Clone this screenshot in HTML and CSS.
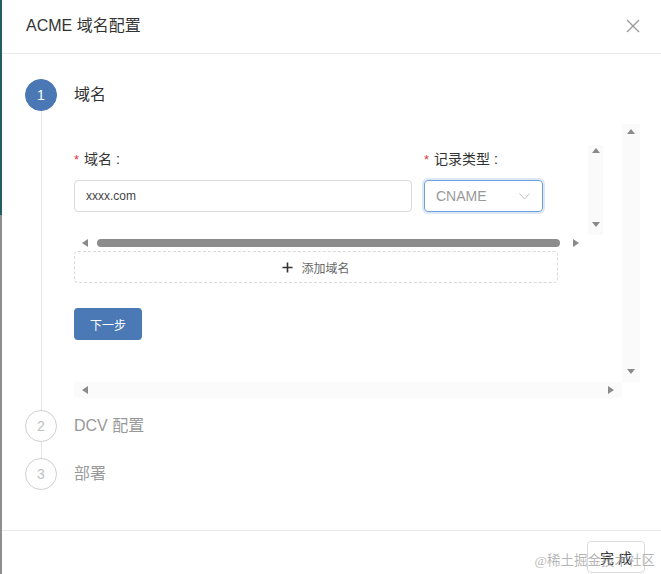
FILE: index.html
```html
<!DOCTYPE html>
<html lang="zh">
<head>
<meta charset="utf-8">
<title>ACME 域名配置</title>
<link rel="stylesheet" href="styles.css">
</head>
<body>
<div class="page">
  <div class="backdrop-strip"></div>
  <div class="modal">
    <div class="modal-header">
      <div class="modal-title">ACME 域名配置</div>
      <svg class="close-icon" width="14" height="14" viewBox="0 0 14 14"><path d="M1 1L13 13M13 1L1 13" stroke="#9a9a9a" stroke-width="1.3" fill="none"/></svg>
    </div>
    <div class="modal-body">
      <div class="step">
        <div class="step-rail">
          <div class="step-circle active">1</div>
          <div class="step-line"></div>
        </div>
        <div class="step-main step-main-first">
          <div class="step-title">域名</div>
          <div class="scroll-outer">
            <div class="outer-content">
              <div class="inner-block">
                <div class="inner-content">
                  <div class="form-row">
                    <div class="field field-domain">
                      <div class="field-label"><span class="req">*</span>域名 :</div>
                      <div class="input">xxxx.com</div>
                    </div>
                    <div class="field field-type">
                      <div class="field-label"><span class="req">*</span>记录类型 :</div>
                      <div class="select">
                        <span>CNAME</span>
                        <svg width="11" height="7" viewBox="0 0 11 7"><path d="M0.5 0.5L5.5 6L10.5 0.5" stroke="#c4c4c4" stroke-width="1" fill="none"/></svg>
                      </div>
                    </div>
                  </div>
                </div>
                <div class="vbar inner-vbar">
                  <span class="arr arr-up"></span>
                  <span class="arr arr-down"></span>
                </div>
                <div class="hbar inner-hbar">
                  <span class="arr arr-left"></span>
                  <span class="thumb"></span>
                  <span class="arr arr-right"></span>
                </div>
              </div>
              <div class="add-box"><svg class="plus" width="11" height="11" viewBox="0 0 11 11"><path d="M5.5 0.5V10.5M0.5 5.5H10.5" stroke="#333" stroke-width="1.6" fill="none"/></svg>添加域名</div>
              <div class="btn-primary">下一步</div>
            </div>
            <div class="vbar outer-vbar">
              <span class="arr arr-up"></span>
              <span class="arr arr-down"></span>
            </div>
            <div class="hbar outer-hbar">
              <span class="arr arr-left"></span>
              <span class="arr arr-right"></span>
            </div>
          </div>
        </div>
      </div>
      <div class="step">
        <div class="step-rail">
          <div class="step-circle">2</div>
          <div class="step-line"></div>
        </div>
        <div class="step-main step-main-mid">
          <div class="step-title muted">DCV 配置</div>
        </div>
      </div>
      <div class="step">
        <div class="step-rail">
          <div class="step-circle">3</div>
        </div>
        <div class="step-main">
          <div class="step-title muted">部署</div>
        </div>
      </div>
    </div>
    <div class="modal-footer">
      <div class="btn-default">完 成</div>
      <div class="watermark">@稀土掘金技术社区</div>
    </div>
  </div>
</div>
</body>
</html>
```

FILE: styles.css
```css
html, body {
  margin: 0;
  padding: 0;
  background: #ffffff;
}
body {
  font-family: "Liberation Sans", "Noto Sans CJK SC", sans-serif;
  color: #333;
}
.page {
  display: flex;
  width: 661px;
  height: 574px;
  overflow: hidden;
}
.backdrop-strip {
  width: 2px;
  flex: none;
  background: linear-gradient(#215d67 0, #215d67 215px, #8e8e8e 215px, #8e8e8e 100%);
}
.modal {
  flex: 1;
  display: flex;
  flex-direction: column;
  background: #fff;
  position: relative;
}
.modal-header {
  height: 53px;
  border-bottom: 1px solid #e8e8e8;
  display: flex;
  align-items: center;
  justify-content: space-between;
  padding: 0 21px 0 24px;
}
.modal-title {
  font-size: 16px;
  color: #333;
  line-height: 22px;
  margin-top: -2px;
}
.close-icon {
  margin-top: -2px;
}
.modal-body {
  flex: 1;
  padding: 25px 21px 0 23px;
  display: flex;
  flex-direction: column;
}
.step {
  display: grid;
  grid-template-columns: 32px 1fr;
  column-gap: 17px;
}
.step-rail {
  display: flex;
  flex-direction: column;
  align-items: center;
}
.step-circle {
  width: 32px;
  height: 32px;
  box-sizing: border-box;
  border-radius: 50%;
  border: 1px solid #d0d0d0;
  color: #c0c0c0;
  font-size: 14px;
  display: flex;
  align-items: center;
  justify-content: center;
  flex: none;
}
.step-circle.active {
  background: #4a78b4;
  border-color: #4a78b4;
  color: #fff;
}
.step-line {
  flex: 1;
  width: 1px;
  background: #e6e6e6;
}
.step-main-first {
  padding-bottom: 12px;
}
.step-main-mid {
  padding-bottom: 16px;
}
.step-title {
  height: 32px;
  line-height: 32px;
  font-size: 16px;
  color: #333;
}
.step-title.muted {
  color: #999;
}
.scroll-outer {
  margin-top: 11px;
  display: grid;
  grid-template-columns: 548px 18px;
  grid-template-rows: 260px 16px;
}
.outer-content {
  padding-top: 23px;
}
.inner-block {
  width: 529px;
  display: grid;
  grid-template-columns: 514px 15px;
  grid-template-rows: 90px 16px;
}
.inner-content {
  padding-top: 3px;
}
.form-row {
  display: flex;
  gap: 12px;
}
.field-label {
  font-size: 14px;
  line-height: 22px;
  color: #333;
  margin-bottom: 9px;
}
.req {
  color: #e0393e;
  font-size: 13px;
  margin-right: 5px;
}
.input {
  width: 338px;
  height: 32px;
  box-sizing: border-box;
  border: 1px solid #d9d9d9;
  border-radius: 4px;
  padding: 0 11px;
  font-size: 12px;
  line-height: 30px;
  color: #444;
}
.select {
  width: 119px;
  height: 32px;
  box-sizing: border-box;
  border: 1px solid #6aa0dc;
  border-radius: 4px;
  box-shadow: 0 0 0 2px rgba(74, 130, 200, 0.18);
  padding: 0 12px 0 11px;
  font-size: 14px;
  color: #999;
  display: flex;
  align-items: center;
  justify-content: space-between;
}
.vbar {
  display: flex;
  flex-direction: column;
  align-items: center;
  justify-content: space-between;
}
.inner-vbar {
  background: #fafafa;
  padding: 3px 0 8px;
}
.outer-vbar {
  background: #fafafa;
  margin-top: 2px;
  padding: 5px 0 8px;
}
.hbar {
  display: flex;
  align-items: center;
}
.inner-hbar {
  grid-column: 1;
  padding: 0 9px 0 8px;
}
.outer-hbar {
  background: #fbfbfb;
  padding: 0 8px 0 8px;
  justify-content: space-between;
}
.thumb {
  width: 463px;
  height: 8px;
  border-radius: 4px;
  background: #8c8c8c;
  margin-left: 9px;
  margin-right: auto;
}
.arr {
  width: 0;
  height: 0;
  display: block;
}
.arr-up {
  border-left: 4px solid transparent;
  border-right: 4px solid transparent;
  border-bottom: 5px solid #8a8a8a;
}
.arr-down {
  border-left: 4px solid transparent;
  border-right: 4px solid transparent;
  border-top: 5px solid #8a8a8a;
}
.arr-left {
  border-top: 4px solid transparent;
  border-bottom: 4px solid transparent;
  border-right: 6px solid #8a8a8a;
}
.arr-right {
  border-top: 4px solid transparent;
  border-bottom: 4px solid transparent;
  border-left: 6px solid #8a8a8a;
}
.add-box {
  width: 484px;
  height: 32px;
  box-sizing: border-box;
  border: 1px dashed #d9d9d9;
  border-radius: 4px;
  display: flex;
  align-items: center;
  justify-content: center;
  font-size: 12px;
  color: #666;
}
.plus {
  margin-right: 8px;
}
.btn-primary {
  margin-top: 25px;
  width: 68px;
  height: 32px;
  border-radius: 4px;
  background: #4a79b5;
  color: #fff;
  font-size: 12px;
  display: flex;
  align-items: center;
  justify-content: center;
}
.modal-footer {
  border-top: 1px solid #e8e8e8;
  height: 44px;
  display: flex;
  justify-content: flex-end;
  align-items: flex-start;
  padding: 10px 16px 0 0;
  box-sizing: border-box;
}
.btn-default {
  width: 58px;
  height: 32px;
  box-sizing: border-box;
  border: 1px solid #d9d9d9;
  border-radius: 4px;
  font-size: 14px;
  color: #333;
  display: flex;
  align-items: center;
  justify-content: center;
}
.watermark {
  position: absolute;
  right: 6px;
  bottom: 5px;
  font-family: "Liberation Serif", "Noto Sans CJK SC", serif;
  font-size: 13.5px;
  color: rgba(150, 150, 150, 0.7);
  pointer-events: none;
}
```
